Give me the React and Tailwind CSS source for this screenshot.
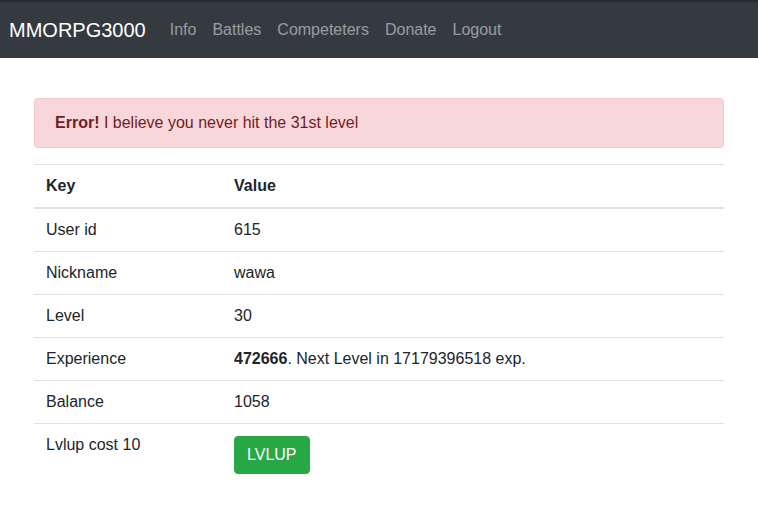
const rows = [
  { key: 'User id', value: '615' },
  { key: 'Nickname', value: 'wawa' },
  { key: 'Level', value: '30' },
  {
    key: 'Experience',
    value: (
      <>
        <b className="font-bold">472666</b>. Next Level in 17179396518 exp.
      </>
    ),
  },
  { key: 'Balance', value: '1058' },
]

function Navbar() {
  const links = ['Info', 'Battles', 'Competeters', 'Donate', 'Logout']
  return (
    <nav className="flex h-[58px] items-center border-t-2 border-[#26292d] bg-[#343a40] pl-[9px]">
      <span className="mr-4 text-[20px] leading-[30px] text-white">MMORPG3000</span>
      <ul className="flex">
        {links.map((l) => (
          <li key={l}>
            <a className="block px-2 text-base leading-6 text-[rgba(255,255,255,0.5)]">{l}</a>
          </li>
        ))}
      </ul>
    </nav>
  )
}

export default function App() {
  return (
    <div className="min-h-[514px] bg-white font-['Liberation_Sans',Arial,sans-serif] text-base leading-6 text-[#212529]">
      <Navbar />
      <main className="px-[34px] pt-10">
        <div className="mb-4 rounded border border-[#f5c6cb] bg-[#f8d7da] px-5 py-3 text-[#721c24]">
          <strong className="font-bold">Error!</strong> I believe you never hit the 31st level
        </div>
        <table className="w-full border-collapse">
          <thead>
            <tr className="border-t border-[#dee2e6]">
              <th className="w-[188px] border-b-2 border-[#dee2e6] px-3 py-[9px] text-left font-bold">Key</th>
              <th className="border-b-2 border-[#dee2e6] px-3 py-[9px] text-left font-bold">Value</th>
            </tr>
          </thead>
          <tbody>
            {rows.map((r) => (
              <tr key={r.key} className="border-t border-[#dee2e6]">
                <td className="px-3 py-[9px] align-top">{r.key}</td>
                <td className="px-3 py-[9px] align-top">{r.value}</td>
              </tr>
            ))}
            <tr className="border-t border-[#dee2e6]">
              <td className="px-3 py-[9px] align-top">Lvlup cost 10</td>
              <td className="px-3 py-3 align-top">
                <button className="rounded border border-[#28a745] bg-[#28a745] px-3 py-1.5 text-base leading-6 text-white">
                  LVLUP
                </button>
              </td>
            </tr>
          </tbody>
        </table>
      </main>
    </div>
  )
}
